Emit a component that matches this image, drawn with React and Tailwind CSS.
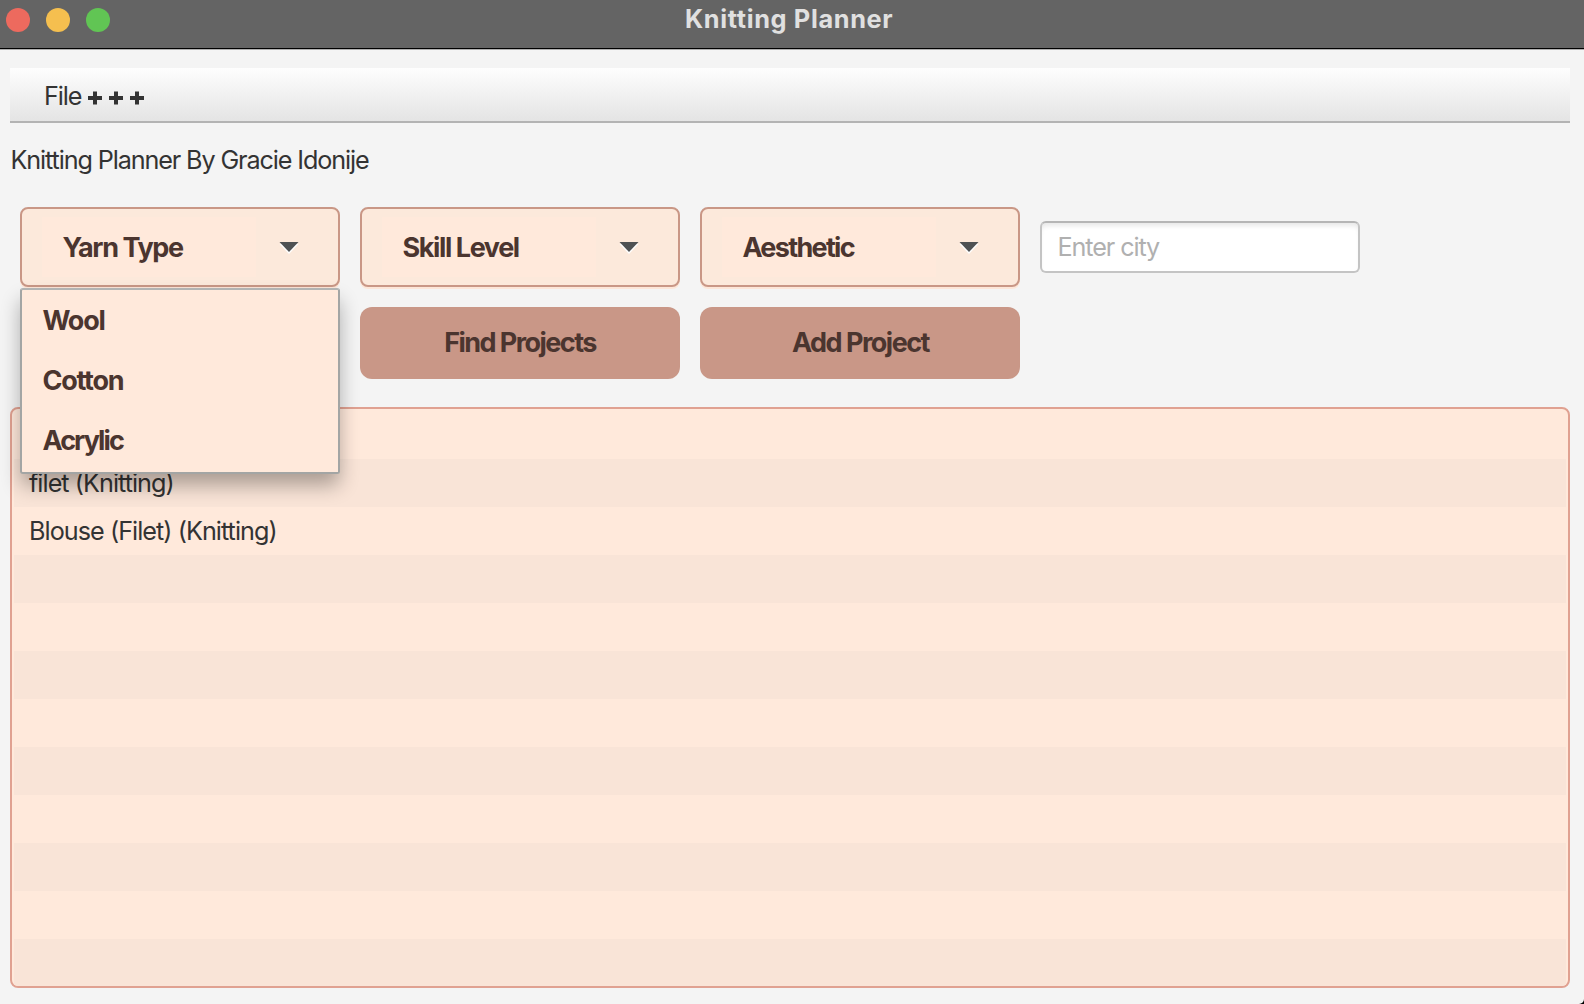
import React from "react";

function Arrow() {
  return (
    <svg className="mt-0.5 mr-[39px] h-3 w-5" viewBox="0 0 20 12">
      <path d="M0.5 2 H19.5 L10 12 Z" fill="#fff" />
      <path d="M0.5 0 H19.5 L10 10 Z" fill="#4f5254" />
    </svg>
  );
}

function Combo({ label, cls }) {
  return (
    <div className="flex h-20 w-80 items-center justify-between rounded-lg border-2 border-[#c99786] bg-[#fce9db] shadow-[0_2px_0_#fde6d8]">
      <div className="ml-5 flex h-[60px] w-[214px] items-center bg-[#ffe9db] pt-0.5">
        <span className={cls}>{label}</span>
      </div>
      <Arrow />
    </div>
  );
}

function Plus() {
  return (
    <svg className="h-[14px] w-[14px]" viewBox="0 0 14 14">
      <path d="M5 0.5H9V5H14V9H9V13.5H5V9H0V5H5Z" fill="#333" />
    </svg>
  );
}

const rows = ["", "filet (Knitting)", "Blouse (Filet) (Knitting)", "", "", "", "", "", "", "", "", ""];

const yarns = [
  { name: "Wool", cls: "tracking-[-1.3px]" },
  { name: "Cotton", cls: "tracking-[-1.3px]" },
  { name: "Acrylic", cls: "tracking-[-1.9px]" },
];

export default function App() {
  return (
    <div className="h-[1004px] w-[1584px] overflow-hidden bg-black">
      <div className="flex h-full flex-col overflow-hidden rounded-br-[5px] bg-[#f4f4f4] font-['Inter',sans-serif] text-[25.2px] leading-8 text-[#333]">
        <header className="flex h-[50px] shrink-0 items-start border-b border-[#b0b0b0] bg-[#646464] shadow-[inset_0_-1px_0_#000]">
          <div className="flex gap-4 pt-2 pl-1.5">
            <i className="h-6 w-6 rounded-full bg-[#ed6a5e]" />
            <i className="h-6 w-6 rounded-full bg-[#f5bf4f]" />
            <i className="h-6 w-6 rounded-full bg-[#61c554]" />
          </div>
          <h1 className="mt-[3px] ml-[575px] text-[25.3px] font-bold tracking-[0.65px] whitespace-nowrap text-[#e0e0e0]">
            Knitting Planner
          </h1>
        </header>
        <main className="relative flex flex-col px-2.5 pt-[18px]">
          <nav className="flex h-[55px] w-[1560px] items-center border-b-2 border-[#b3b3b3] bg-linear-to-b from-[#fefefe] to-[#e4e4e4] pl-[34px]">
            <span className="mt-0.5 w-[38px] tracking-[-1.1px]">File</span>
            <div className="mt-[7px] ml-[6px] flex gap-[7px]">
              <Plus />
              <Plus />
              <Plus />
            </div>
          </nav>
          <p className="mt-[21px] pl-[0.5px] tracking-[-1.12px]">Knitting Planner By Gracie Idonije</p>
          <section className="mt-[31px] grid w-[1350px] grid-cols-4 gap-5 pl-2.5 text-[27px] font-bold text-[#4b352f]">
            <Combo label="Yarn Type" cls="ml-[20.5px] tracking-[-1.4px]" />
            <Combo label="Skill Level" cls="ml-[20.5px] tracking-[-1.4px]" />
            <Combo label="Aesthetic" cls="ml-[20.5px] tracking-[-1.7px]" />
            <div className="mt-[14px] flex h-[52px] w-80 items-center rounded-md border-2 border-[#c4c4c4] border-t-[#b5b5b5] bg-white pl-[15.5px] text-[25.2px] font-normal text-[#b0b0b0] shadow-[inset_0_5px_5px_-2px_#e8e8e8]">
              <span className="tracking-[-1.1px]">Enter city</span>
            </div>
            <button className="col-start-2 flex h-[72px] items-center justify-center rounded-xl bg-[#c99787] tracking-[-1.55px]">
              Find Projects
            </button>
            <button className="flex h-[72px] items-center justify-center rounded-xl bg-[#c99787] pl-px tracking-[-1.5px]">
              Add Project
            </button>
          </section>
          <ul className="mt-7 h-[581px] w-[1560px] overflow-hidden rounded-lg border-2 border-[#e0a191] bg-[#ffe9db] p-0.5">
            {rows.map((r, i) => (
              <li key={i} className="flex h-12 items-center pl-[15px] tracking-[-0.96px] odd:bg-[#ffe9db] even:bg-[#f9e4d7]">
                {r}
              </li>
            ))}
          </ul>
          <ul className="absolute top-[238px] left-5 h-[186px] w-80 rounded-[3px] border-2 border-[#a3a5a4] border-t-[#b2b4b3] bg-[#ffe9db] text-[27px] font-bold text-[#4b352f] shadow-[0_12px_20px_-1px_rgba(0,0,0,0.32)]">
            {yarns.map((y) => (
              <li key={y.name} className="flex h-[60px] items-center pt-0.5 pl-[20.5px]">
                <span className={y.cls}>{y.name}</span>
              </li>
            ))}
          </ul>
        </main>
      </div>
    </div>
  );
}
